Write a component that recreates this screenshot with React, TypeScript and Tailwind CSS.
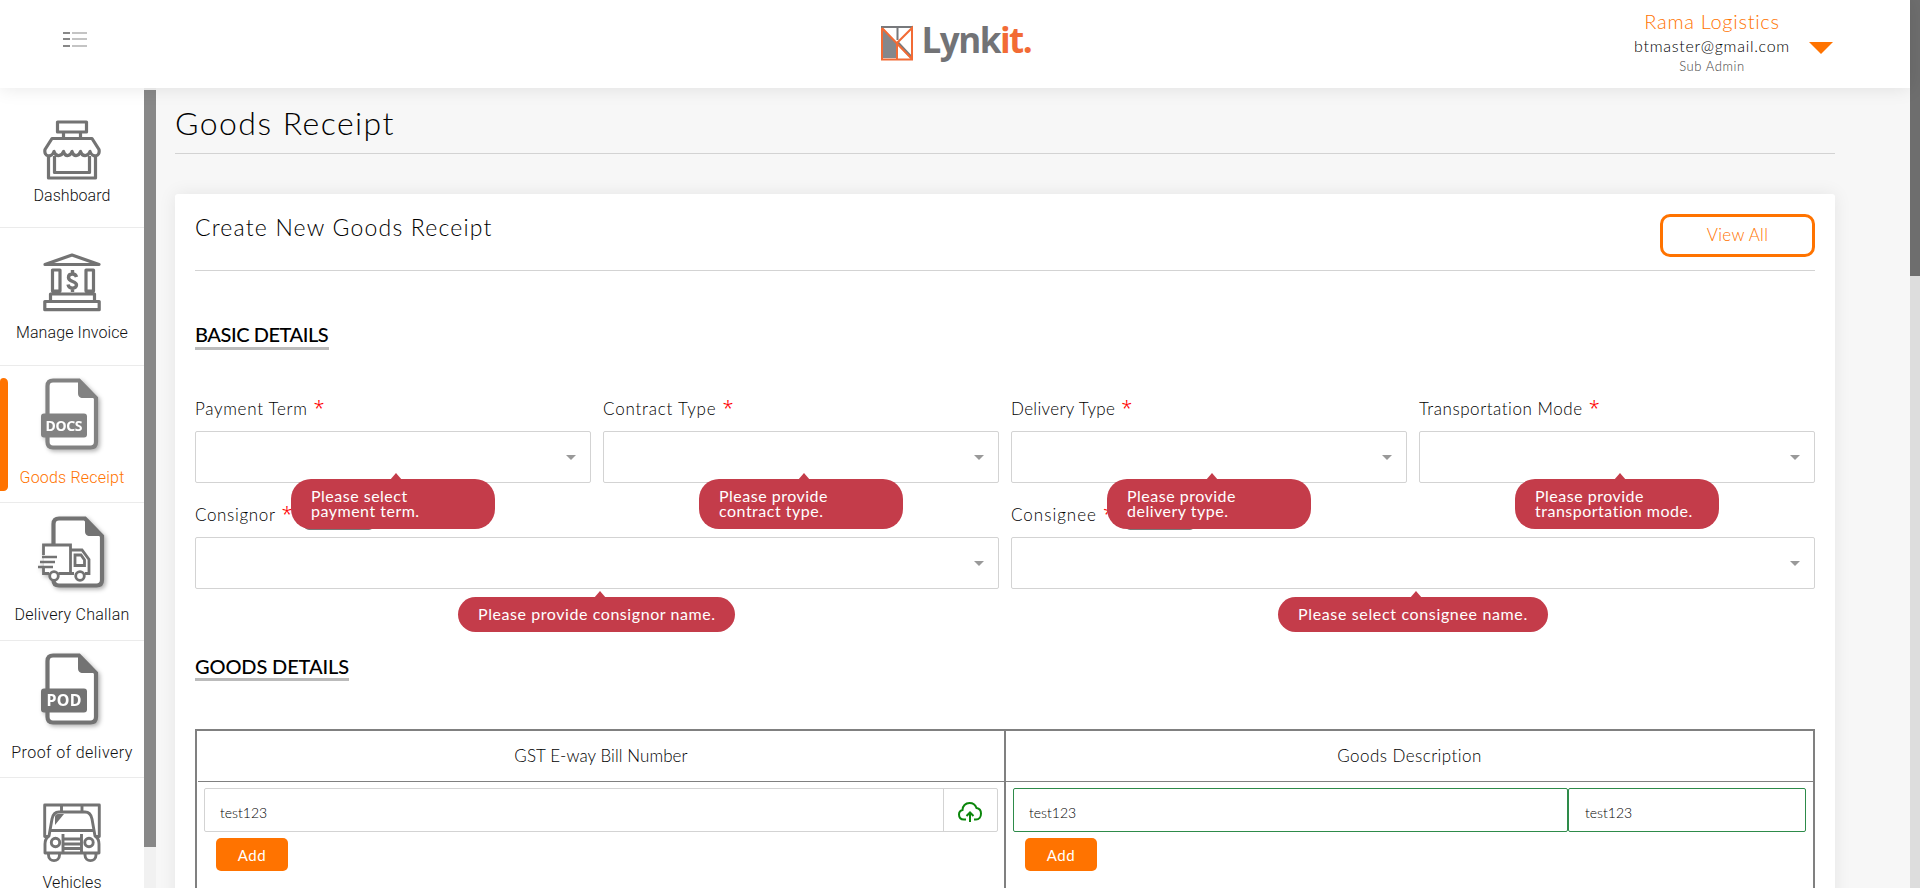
import React from "react";

const body = "font-['Lato',sans-serif] font-light";

function ShopIcon() {
  return (
    <svg width="58" height="60" viewBox="0 0 58 60" fill="none" stroke="#737373" strokeWidth="3.2" strokeLinejoin="round">
      <path d="M14.5 2h29v10h-29zM20.500 12v6M37.500 12v6" />
      <path d="M9 18.500h40l7 11c1.500 8-7 8-9 2-2 5.500-8 5.500-9.500 0-2 5.500-7 5.500-8.500 0-2 5.500-7 5.500-8.500 0-2 5.500-8 5.500-9.500 0-2 6-10.500 6-9-2z" />
      <path d="M5.500 35v23h47V35" />
      <path d="M11.500 36v16.500h35V36" />
    </svg>
  );
}

function BankIcon() {
  return (
    <svg width="58" height="60" viewBox="0 0 58 60" fill="none" stroke="#737373" strokeWidth="3.2" strokeLinejoin="round">
      <path d="M2 12.500 29 3l27 9.500zM9.500 18h7.500v21H9.500zM43 18h7.500v21H43zM7.500 42h44v7.500h-44zM1.800 49.500h54.400v8.200H1.800z" />
      <path d="M33.500 25c-1-4-8-4-8 .5s8 3.500 8 7.500-7.500 4.500-8.500-.5M29.500 18v4M29.500 36v4" strokeWidth="3.400" />
    </svg>
  );
}

function SheetIcon({ tag, color }: { tag: string; color: string }) {
  return (
    <svg width="62" height="74" viewBox="0 0 62 74" className="drop-shadow-[2px_2px_2px_rgba(0,0,0,0.3)]">
      <path d="M12 2.500h26L55 20v44c0 4-2 5.500-5.500 5.500H12c-4 0-5.500-2-5.500-5.500V8c0-4 2-5.500 5.500-5.500z" fill="#fff" stroke={color} strokeWidth="4.200" />
      <path d="M37 2l19 18H42c-3.500 0-5-1.500-5-5z" fill={color} />
      <rect x="0" y="35.500" width="46" height="24" rx="3" fill={color} />
      {tag === "DOCS" ? (
        <text x="23" y="52.700" textAnchor="middle" fill="#fff" fontFamily="Noto Sans, sans-serif" fontWeight="700" fontSize="14" textLength="37">DOCS</text>
      ) : (
        <text x="23" y="53.300" textAnchor="middle" fill="#fff" fontFamily="Noto Sans, sans-serif" fontWeight="700" fontSize="16" textLength="35">POD</text>
      )}
    </svg>
  );
}

function ChallanIcon() {
  return (
    <svg width="70" height="74" viewBox="0 0 70 74" className="drop-shadow-[2px_2px_2px_rgba(0,0,0,0.3)]" fill="none" stroke="#737373">
      <path d="M22 2.500h26L65 20v44c0 4-2 5.500-5.500 5.500H22c-4 0-5.500-2-5.500-5.500V8c0-4 2-5.500 5.500-5.500z" fill="#fff" strokeWidth="4.200" />
      <path d="M48 2l18 18H53c-3.500 0-5-1.500-5-5z" fill="#737373" stroke="none" />
      <path d="M7 29h26.500v29H7z" fill="#fff" stroke="none" />
      <path d="M6.500 39V29h27v29M6.500 51v6.500H12M21.500 57.500H37M33.500 34H45l7 9.500v14h-4" strokeWidth="2.800" />
      <path d="M38 39h6l3.500 5v5.500H38z" strokeWidth="2.800" />
      <path d="M5 41h15M3 46h15M1 51h15" strokeWidth="2.600" />
      <circle cx="17" cy="60" r="4.300" fill="#fff" strokeWidth="2.800" />
      <circle cx="43" cy="60" r="4.300" fill="#fff" strokeWidth="2.800" />
    </svg>
  );
}

function TruckIcon() {
  return (
    <svg width="58" height="60" viewBox="0 0 58 60" fill="none" stroke="#737373" strokeWidth="2.900" strokeLinejoin="round">
      <path d="M6 33.500H1.700V2h54.600v31.500H52M18.500 2v6M39 2v6" />
      <path d="M6 33 9 16c1-5 3-7 7-7h26c4 0 6 2 7 7l3 17c3 2 4 4 4 8v9H2v-9c0-4 1-6 4-8zM7 27.500h44M20 31v19h18.500V31M20 36h18.500M20 41h18.500M20 45.500h18.500" />
      <circle cx="12.500" cy="39.500" r="4.200" />
      <circle cx="46" cy="39.500" r="4.200" />
      <path d="M5.500 50v2c0 7.500 11 7.500 11 0v-2M42 50v2c0 7.500 11 7.500 11 0v-2" />
      <path d="M12 14c0-2 1-3 3-3h6l-9 11z" fill="#737373" stroke="none" />
    </svg>
  );
}

function NavItem({ label, icon, active, size }: { label: string; icon: React.ReactNode; active?: boolean; size: string }) {
  return (
    <div className="relative flex h-[137.5px] shrink-0 flex-col items-center border-b border-[#ebebeb]">
      {active && <div className="absolute left-0 top-[12px] h-[113px] w-2 rounded-r-[5px] rounded-tl-[4px] bg-[#ff7300]" />}
      {icon}
      <div className={`whitespace-nowrap font-['Roboto',sans-serif] text-[16px] leading-5 ${size} ${active ? "text-[#ff7300]" : "text-[#111]"}`}>{label}</div>
    </div>
  );
}

function Tip({ children, place }: { children: React.ReactNode; place: string }) {
  return (
    <div className={`absolute z-10 whitespace-nowrap rounded-[20px] bg-[#c43c4a] px-5 font-['Lato',sans-serif] text-[16px] font-normal leading-[15px] text-white ${place}`}>
      <svg className="absolute -top-[6px] left-1/2 -ml-[3px]" width="12" height="7" viewBox="0 0 12 7"><path d="M0 7 6 0l6 7z" fill="#c43c4a" /></svg>
      {children}
    </div>
  );
}

const smallTip = "left-24 top-[78px] h-[50px] w-[204px] pt-[9px] tracking-[0.5px]";

function Field({ label, track, tip, place, addOn }: { label: string; track: string; tip: React.ReactNode; place: string; addOn?: boolean }) {
  return (
    <div className="relative">
      <div className="-mt-[2px] flex h-[32px] items-start whitespace-nowrap leading-5">
        <span className={`text-[17px] ${track}`}>{label}</span>
        <span className="-mt-px ml-[6px] font-['Noto_Sans',sans-serif] text-[20px] font-light text-[#ff0000]">*</span>
        {addOn && <span className="ml-[11px] mt-[4px] h-[21px] w-[70px] rounded-[5px] bg-[#777]" />}
      </div>
      <div className="flex h-[52px] items-center justify-end rounded-[2px] border border-[#d3d3d3] bg-white pr-[14px]">
        <svg width="10" height="5" viewBox="0 0 10 5"><path d="M0 0h10L5 5z" fill="#999" /></svg>
      </div>
      <Tip place={place}>{tip}</Tip>
    </div>
  );
}

function AddButton() {
  return <button className="ml-[19px] mt-[6px] block h-[33px] w-[72px] rounded-[5px] bg-[#ff7300] pt-[2px] font-['Lato',sans-serif] text-[15px] font-normal tracking-[0.5px] text-white">Add</button>;
}

export default function App() {
  return (
    <div className={`flex h-[888px] w-[1920px] overflow-hidden bg-[#f7f7f7] text-black ${body}`}>
      <div className="flex w-[1910px] flex-col">
        <header className="relative z-20 flex h-[88px] shrink-0 items-start justify-between bg-white shadow-[0_0_18px_rgba(0,0,0,0.1)]">
          <div className="w-[400px] pl-[63px] pt-8">
            <svg width="24" height="15" viewBox="0 0 24 15">
              <path d="M0 1h7M0 7h7M0 14h7" stroke="#888" strokeWidth="2" />
              <path d="M9 1h15M9 7h15M9 14h15" stroke="#c4c4c4" strokeWidth="2" />
            </svg>
          </div>
          <div className="mr-[119px] flex w-[154px] items-start pt-6">
            <svg className="shrink-0" width="35" height="38" viewBox="0 0 35 38">
              <path d="M2 3v31h15V19z" fill="#85878b" />
              <path d="M1 3h32M17.500 3v13" stroke="#77797c" strokeWidth="2" fill="none" />
              <path d="m17 18 15 16" stroke="#77797c" strokeWidth="3" />
              <path d="M2 4v31.500h30V4L17 19v16M2 4l29 30" stroke="#f26b35" strokeWidth="2" fill="none" />
            </svg>
            <div className="-mt-[8px] ml-[7px] whitespace-nowrap font-['Open_Sans',sans-serif] text-[35px] font-bold leading-[48px] tracking-[-1.5px] text-[#727376]">
              Lynk<span className="text-[#f26b35]">it.</span>
            </div>
          </div>
          <div className="flex pr-[77px] pt-[10px]">
            <div className="w-[160px] text-center">
              <div className="-mt-px whitespace-nowrap text-[20px] leading-6 tracking-[0.7px] text-[#ff7300]">Rama Logistics</div>
              <div className="whitespace-nowrap text-[16px] leading-[26px] tracking-[0.7px] text-black">btmaster@gmail.com</div>
              <div className="mt-px text-[13px] leading-3 tracking-[0.6px] text-[#444]">Sub Admin</div>
            </div>
            <svg className="ml-[17px] mt-8" width="24" height="12" viewBox="0 0 24 12"><path d="M0 0h24L12 12z" fill="#ff7300" /></svg>
          </div>
        </header>
        <div className="flex min-h-0 flex-1">
          <aside className="flex w-36 shrink-0 flex-col overflow-hidden bg-white pt-[2.5px]">
            <NavItem label="Dashboard" size="tracking-[0.05px] mt-[6px]" icon={<div className="pt-[29px]"><ShopIcon /></div>} />
            <NavItem label="Manage Invoice" size="tracking-[0.1px] mt-[11px]" icon={<div className="pt-[24px]"><BankIcon /></div>} />
            <NavItem active label="Goods Receipt" size="tracking-[0.2px] mt-[16px]" icon={<div className="pt-[12px]"><SheetIcon tag="DOCS" color="#828282" /></div>} />
            <NavItem label="Delivery Challan" size="tracking-[0.25px] mt-[15px]" icon={<div className="pt-[13px]"><ChallanIcon /></div>} />
            <NavItem label="Proof of delivery" size="tracking-[0.45px] mt-[16px]" icon={<div className="pt-[12px]"><SheetIcon tag="POD" color="#737373" /></div>} />
            <NavItem label="Vehicles" size="tracking-[0.1px] mt-[10px]" icon={<div className="pt-[25px]"><TruckIcon /></div>} />
          </aside>
          <div className="w-3 shrink-0 bg-[#f1f1f1] pt-[2px]"><div className="h-[757px] bg-[#888]" /></div>
          <main className="ml-[19px] w-[1660px]">
            <h1 className="h-[66px] whitespace-nowrap border-b border-[#d3d3d3] pt-[16px] text-[32px] leading-[38px] tracking-[1.45px]">Goods Receipt</h1>
            <section className="mt-10 h-[720px] rounded-t-[3px] bg-white px-5 pt-5 shadow-[0_0_18px_rgba(0,0,0,0.08)]">
              <div className="flex h-[57px] items-start justify-between border-b border-[#d3d3d3]">
                <h2 className="-mt-px whitespace-nowrap text-[23px] leading-7 tracking-[1.2px]">Create New Goods Receipt</h2>
                <button className="h-[43px] w-[155px] rounded-[10px] border-[3px] border-[#ff7300] pb-px text-[17px] tracking-[0.3px] text-[#ff7300]">View All</button>
              </div>
              <div className="mt-[51px] h-[28px] w-[134px] whitespace-nowrap border-b-[3px] border-[#bbb] text-[20px] font-medium leading-6 tracking-[-0.45px]">BASIC DETAILS</div>
              <div className="mt-[51px] grid grid-cols-4 gap-3">
                <Field label="Payment Term" track="tracking-[0.7px]" place={smallTip} tip={<>Please select<br />payment term.</>} />
                <Field label="Contract Type" track="tracking-[0.8px]" place={smallTip} tip={<>Please provide<br />contract type.</>} />
                <Field label="Delivery Type" track="tracking-[0.35px]" place={smallTip} tip={<>Please provide<br />delivery type.</>} />
                <Field label="Transportation Mode" track="tracking-[0.55px]" place={smallTip} tip={<>Please provide<br />transportation mode.</>} />
              </div>
              <div className="mt-6 grid grid-cols-2 gap-3">
                <Field addOn label="Consignor" track="tracking-[0.65px]" place="left-[263px] top-[90px] h-[35px] w-[277px] pt-[9px] tracking-[0.57px]" tip="Please provide consignor name." />
                <Field addOn label="Consignee" track="tracking-[1px]" place="left-[267px] top-[90px] h-[35px] w-[270px] pt-[9px] tracking-[0.65px]" tip="Please select consignee name." />
              </div>
              <div className="mt-[65px] h-[27px] w-[154px] whitespace-nowrap border-b-[3px] border-[#bbb] text-[20px] font-medium leading-6 tracking-[-0.12px]">GOODS DETAILS</div>
              <div className="mt-12 grid h-[220px] grid-cols-[807px_1fr] border-2 border-[#808080]">
                <div>
                  <div className="ml-px h-[51px] border-b border-[#808080] pt-[15px] text-center text-[17px] leading-5 tracking-[0.07px]">GST E-way Bill Number</div>
                  <div className="ml-[7px] mt-[6px] flex h-11 w-[794px] rounded-[2px] border border-[#d3d3d3]">
                    <div className="w-[739px] border-r border-[#d3d3d3] pl-[15px] pt-[14px] text-[14px] leading-5">test123</div>
                    <div className="flex flex-1 items-center justify-center pr-px">
                      <svg className="mt-[3px]" width="24" height="20" viewBox="0 0 24 20" fill="none" stroke="#0b860b" strokeWidth="2">
                        <path d="M8 17.500H6C3 17.500 1 15.500 1 12.500c0-2.500 1.500-4 3.500-4.500C4.500 4 7.500 1 11.500 1c3.500 0 6 2 7 5 3 .5 4.500 2.500 4.500 5.500 0 3.500-2 6-5 6h-2M12 20v-8M8.500 14 12 10.500l3.500 3.500" />
                      </svg>
                    </div>
                  </div>
                  <AddButton />
                </div>
                <div className="border-l-2 border-[#808080]">
                  <div className="h-[51px] border-b border-[#808080] pt-[15px] text-center text-[17px] leading-5 tracking-[0.45px]">Goods Description</div>
                  <div className="ml-[7px] mt-[6px] flex h-11 w-[793px] text-[14px] leading-5">
                    <div className="w-[555px] rounded-[2px] border border-[#2e8b4a] pl-[15px] pt-[14px]">test123</div>
                    <div className="flex-1 rounded-[2px] border border-[#2e8b4a] pl-[16px] pt-[14px]">test123</div>
                  </div>
                  <AddButton />
                </div>
              </div>
            </section>
          </main>
        </div>
      </div>
      <div className="w-[10px] bg-[#ddd]"><div className="h-[276px] bg-[#6e6e6e]" /></div>
    </div>
  );
}
